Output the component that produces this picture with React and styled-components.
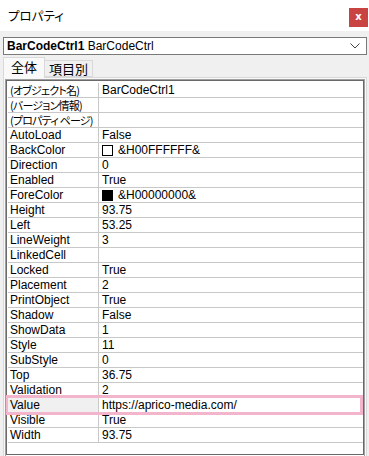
import React from "react";
import styled, { createGlobalStyle } from "styled-components";

const GlobalStyle = createGlobalStyle`
  html, body {
    margin: 0;
    padding: 0;
    background: #f0f0f0;
  }
  body {
    font-family: "Liberation Sans", "Noto Sans CJK JP", sans-serif;
    font-size: 12px;
    color: #000;
  }
`;

const rows = [
  { name: "(オブジェクト名)", value: "BarCodeCtrl1" },
  { name: "(バージョン情報)", value: "" },
  { name: "(プロパティ ページ)", value: "" },
  { name: "AutoLoad", value: "False" },
  { name: "BackColor", value: "&H00FFFFFF&", swatch: "#fff" },
  { name: "Direction", value: "0" },
  { name: "Enabled", value: "True" },
  { name: "ForeColor", value: "&H00000000&", swatch: "#000" },
  { name: "Height", value: "93.75" },
  { name: "Left", value: "53.25" },
  { name: "LineWeight", value: "3" },
  { name: "LinkedCell", value: "" },
  { name: "Locked", value: "True" },
  { name: "Placement", value: "2" },
  { name: "PrintObject", value: "True" },
  { name: "Shadow", value: "False" },
  { name: "ShowData", value: "1" },
  { name: "Style", value: "11" },
  { name: "SubStyle", value: "0" },
  { name: "Top", value: "36.75" },
  { name: "Validation", value: "2" },
  { name: "Value", value: "https://aprico-media.com/", marked: true },
  { name: "Visible", value: "True" },
  { name: "Width", value: "93.75" },
];

const Window = styled.div`
  width: 369px;
  height: 456px;
  overflow: hidden;
  display: flex;
  flex-direction: column;
  background: #f0f0f0;
`;

const TitleBar = styled.div`
  height: 31px;
  flex: none;
  background: #fff;
  display: flex;
  align-items: center;
  justify-content: space-between;
  padding: 0 1px 0 8px;
  font-family: "Noto Sans CJK JP", sans-serif;
  font-feature-settings: "palt";
  font-size: 12.5px;
`;

const CloseButton = styled.div`
  width: 19px;
  height: 19px;
  margin-top: 4px;
  background: #c94343;
  color: #fff;
  display: flex;
  align-items: center;
  justify-content: center;
  font-family: "DejaVu Sans", sans-serif;
  font-weight: bold;
  font-size: 10px;
  line-height: 1;
  padding-bottom: 2px;
  box-sizing: border-box;
`;

const Body = styled.div`
  flex: 1;
  display: flex;
  flex-direction: column;
  padding: 6px 2px 0 3px;
  min-height: 0;
`;

const Combo = styled.div`
  height: 18px;
  box-sizing: border-box;
  border: 1px solid #7a7a7a;
  background: #fff;
  display: flex;
  align-items: center;
  padding: 0 6px 0 3px;
  font-size: 12px;
  white-space: pre;
`;

const ComboText = styled.span`
  flex: 1;
`;

const Bold = styled.b`
  font-weight: bold;
`;

const TabRow = styled.div`
  display: flex;
  align-items: flex-end;
  height: 20px;
  margin-top: 2px;
  position: relative;
  z-index: 1;
`;

const Tab = styled.div`
  box-sizing: border-box;
  width: ${(p) => p.$w}px;
  height: ${(p) => (p.$active ? 21 : 17)}px;
  margin-bottom: ${(p) => (p.$active ? -1 : 0)}px;
  border: 1px solid #d9d9d9;
  border-bottom: ${(p) => (p.$active ? "none" : "1px solid #d9d9d9")};
  border-left: ${(p) => (p.$active ? "1px solid #d9d9d9" : "none")};
  background: ${(p) => (p.$active ? "#f9f9f9" : "#f0f0f0")};
  font-family: "Noto Sans CJK JP", sans-serif;
  font-size: 13px;
  display: flex;
  justify-content: center;
  align-items: ${(p) => (p.$active ? "flex-start" : "center")};
  padding-top: ${(p) => (p.$active ? 1 : 0)}px;
  line-height: 16px;
`;

const Frame = styled.div`
  flex: 1;
  min-height: 0;
  border: 1px solid #d9d9d9;
  border-bottom: none;
  background: #f9f9f9;
  padding: 1px 1px 0 1px;
  display: flex;
`;

const Grid = styled.div`
  flex: 1;
  border: 1px solid #a0a0a0;
  border-bottom: none;
  outline: 1px solid #696969;
  outline-offset: -2px;
  background: #fff;
  padding: 3px 1px 0 2px;
  display: flex;
  flex-direction: column;
  overflow: hidden;
`;

const Row = styled.div`
  flex: none;
  height: 15px;
  display: grid;
  grid-template-columns: 91px 1fr;
  position: relative;

  &::after {
    content: "";
    display: ${(p) => (p.$marked ? "block" : "none")};
    position: absolute;
    left: -3px;
    right: 0;
    top: -3px;
    bottom: -2px;
    border: 3px solid #f3b5cc;
    pointer-events: none;
    z-index: 2;
  }
`;

const Cell = styled.div`
  box-sizing: border-box;
  border-bottom: 1px solid #c8c8c8;
  border-right: ${(p) => (p.$name ? "1px solid #c8c8c8" : "none")};
  background: ${(p) => (p.$name && p.$marked ? "#f0f0f0" : "#fff")};
  padding-left: ${(p) => (p.$name ? 2 : 3)}px;
  display: flex;
  align-items: center;
  white-space: nowrap;
  overflow: hidden;
  font-family: ${(p) =>
    p.$jp ? '"Noto Sans CJK JP", sans-serif' : '"Liberation Sans", sans-serif'};
  font-size: ${(p) => (p.$jp ? 11 : 12)}px;
  letter-spacing: ${(p) => (p.$jp ? "-0.8px" : "0")};
  font-feature-settings: "palt";
  line-height: 14px;
`;

const Swatch = styled.span`
  width: 11px;
  height: 11px;
  box-sizing: border-box;
  border: 1px solid #000;
  background: ${(p) => p.$color};
  margin-right: 5px;
  flex: none;
`;

const Chevron = () => (
  <svg width="10" height="6" viewBox="0 0 10 6">
    <path d="M0.5 0.5 L5 5 L9.5 0.5" fill="none" stroke="#444" strokeWidth="1" />
  </svg>
);

export default function App() {
  return (
    <Window>
      <GlobalStyle />
      <TitleBar>
        <span>プロパティ</span>
        <CloseButton>x</CloseButton>
      </TitleBar>
      <Body>
        <Combo>
          <ComboText>
            <Bold>BarCodeCtrl1</Bold> BarCodeCtrl
          </ComboText>
          <Chevron />
        </Combo>
        <TabRow>
          <Tab $active $w={42}>全体</Tab>
          <Tab $w={48}>項目別</Tab>
        </TabRow>
        <Frame>
          <Grid>
            {rows.map((r) => (
              <Row key={r.name} $marked={r.marked}>
                <Cell $name $marked={r.marked} $jp={r.name.startsWith("(")}>
                  {r.name}
                </Cell>
                <Cell>
                  {r.swatch && <Swatch $color={r.swatch} />}
                  {r.value}
                </Cell>
              </Row>
            ))}
          </Grid>
        </Frame>
      </Body>
    </Window>
  );
}
